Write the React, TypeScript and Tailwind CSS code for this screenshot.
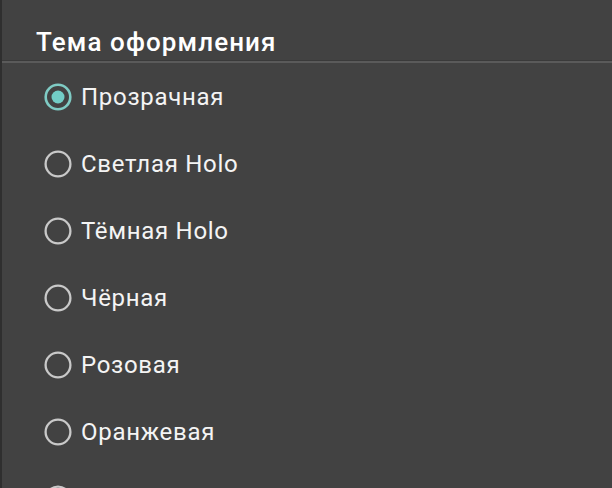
import React from "react";

const items = [
  { label: "Прозрачная", selected: true },
  { label: "Светлая Holo" },
  { label: "Тёмная Holo" },
  { label: "Чёрная" },
  { label: "Розовая" },
  { label: "Оранжевая" },
  { label: "Красная" },
];

function Radio({ selected }: { selected?: boolean }) {
  return (
    <svg width="28" height="28" viewBox="0 0 28 28" className="shrink-0">
      {selected ? (
        <>
          <circle cx="14" cy="14" r="12.3" fill="none" stroke="#7fcbc4" strokeWidth="2.6" />
          <circle cx="14" cy="14" r="6.5" fill="#72cdc6" />
        </>
      ) : (
        <circle cx="14" cy="14" r="12.4" fill="none" stroke="#c9c9c9" strokeWidth="2.3" />
      )}
    </svg>
  );
}

export default function App() {
  return (
    <div
      className="w-[612px] h-[488px] overflow-hidden bg-[#424242] border-l-2 border-[#2f2f2f]"
      style={{ fontFamily: "Roboto, 'Liberation Sans', sans-serif" }}
    >
      <div className="pt-[26px] pb-[2px] pl-[34px] text-[26px] leading-[32px] tracking-[1.1px] font-medium text-white">
        Тема оформления
      </div>
      <div className="h-[1px] bg-[#3a3a3a]" />
      <div className="h-[2px] bg-[#5a5a5a]" />
      <div className="flex flex-col">
        {items.map((it) => (
          <div key={it.label} className="h-[67px] shrink-0 flex items-center pl-[42px] gap-[9px]">
            <Radio selected={it.selected} />
            <span className="text-[24px] leading-[28px] tracking-[0.7px] text-[#f4f4f4]">{it.label}</span>
          </div>
        ))}
      </div>
    </div>
  );
}
